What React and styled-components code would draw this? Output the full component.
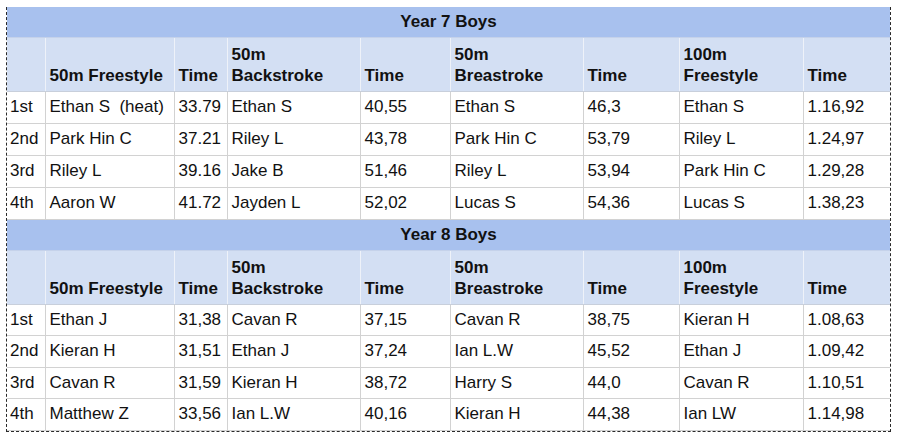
import React from "react";
import styled, { createGlobalStyle } from "styled-components";

const GlobalStyle = createGlobalStyle`
  body {
    margin: 0;
    background: #ffffff;
    font-family: "Liberation Sans", Arial, sans-serif;
    color: #111;
  }
`

const Frame = styled.div`
  box-sizing: border-box;
  width: 885px;
  margin: 7px 0 0 6px;
  border: 1px dashed #2a2a2a;
  border-top: none;
`

const Sheet = styled.table`
  width: 883px;
  border-collapse: collapse;
  table-layout: fixed;
  font-size: 17px;
`

const TitleCell = styled.th`
  box-sizing: border-box;
  height: 30px;
  padding: 0;
  background: #a8c1ee;
  font-weight: 700;
  text-align: center;
  vertical-align: middle;
  border-bottom: 1px solid #c5d2ea;
  ${(props) =>
    props.$tall &&
    `height: 31px;`
  }
`

const HeadCell = styled.th`
  box-sizing: border-box;
  height: 54px;
  padding: 0 4px 5px;
  background: #d3dff3;
  font-weight: 700;
  text-align: left;
  vertical-align: bottom;
  line-height: 21px;
  white-space: pre-line;
  border-left: 1px solid #eef2f9;
  border-bottom: 1px solid #c8cfdb;
  &:first-child {
    border-left: none;
  }
`

const Cell = styled.td`
  box-sizing: border-box;
  height: 32px;
  padding: 0 4px;
  text-align: left;
  vertical-align: middle;
  white-space: pre;
  line-height: 20px;
  border-left: 1px solid #d2d2d2;
  border-bottom: 1px solid #d2d2d2;
  &:first-child {
    border-left: none;
    padding-left: 3px;
  }
  ${(props) =>
    props.$compact &&
    `height: 31.5px;`
  }
`

const widths = [38, 129, 53, 133, 90, 133, 96, 124, 87]

const headers = [
  "",
  "50m Freestyle",
  "Time",
  "50m\nBackstroke",
  "Time",
  "50m\nBreastroke",
  "Time",
  "100m\nFreestyle",
  "Time",
]

const groups = [
  {
    title: "Year 7 Boys",
    rows: [
      ["1st", "Ethan S  (heat)", "33.79", "Ethan S", "40,55", "Ethan S", "46,3", "Ethan S", "1.16,92"],
      ["2nd", "Park Hin C", "37.21", "Riley L", "43,78", "Park Hin C", "53,79", "Riley L", "1.24,97"],
      ["3rd", "Riley L", "39.16", "Jake B", "51,46", "Riley L", "53,94", "Park Hin C", "1.29,28"],
      ["4th", "Aaron W", "41.72", "Jayden L", "52,02", "Lucas S", "54,36", "Lucas S", "1.38,23"],
    ],
  },
  {
    title: "Year 8 Boys",
    tall: true,
    rows: [
      ["1st", "Ethan J", "31,38", "Cavan R", "37,15", "Cavan R", "38,75", "Kieran H", "1.08,63"],
      ["2nd", "Kieran H", "31,51", "Ethan J", "37,24", "Ian L.W", "45,52", "Ethan J", "1.09,42"],
      ["3rd", "Cavan R", "31,59", "Kieran H", "38,72", "Harry S", "44,0", "Cavan R", "1.10,51"],
      ["4th", "Matthew Z", "33,56", "Ian L.W", "40,16", "Kieran H", "44,38", "Ian LW", "1.14,98"],
    ],
  },
]

function App() {
  return (
    <>
      <GlobalStyle />
      <Frame>
        <Sheet>
          <colgroup>
            {widths.map((w, i) => (
              <col key={i} style={{ width: w }} />
            ))}
          </colgroup>
          <tbody>
            {groups.map((group) => (
              <React.Fragment key={group.title}>
                <tr>
                  <TitleCell colSpan={9} $tall={group.tall}>{group.title}</TitleCell>
                </tr>
                <tr>
                  {headers.map((h, i) => (
                    <HeadCell key={i}>{h}</HeadCell>
                  ))}
                </tr>
                {group.rows.map((row) => (
                  <tr key={row[0]}>
                    {row.map((value, i) => (
                      <Cell key={i} $compact={group.tall}>{value}</Cell>
                    ))}
                  </tr>
                ))}
              </React.Fragment>
            ))}
          </tbody>
        </Sheet>
      </Frame>
    </>
  )
}

export default App
